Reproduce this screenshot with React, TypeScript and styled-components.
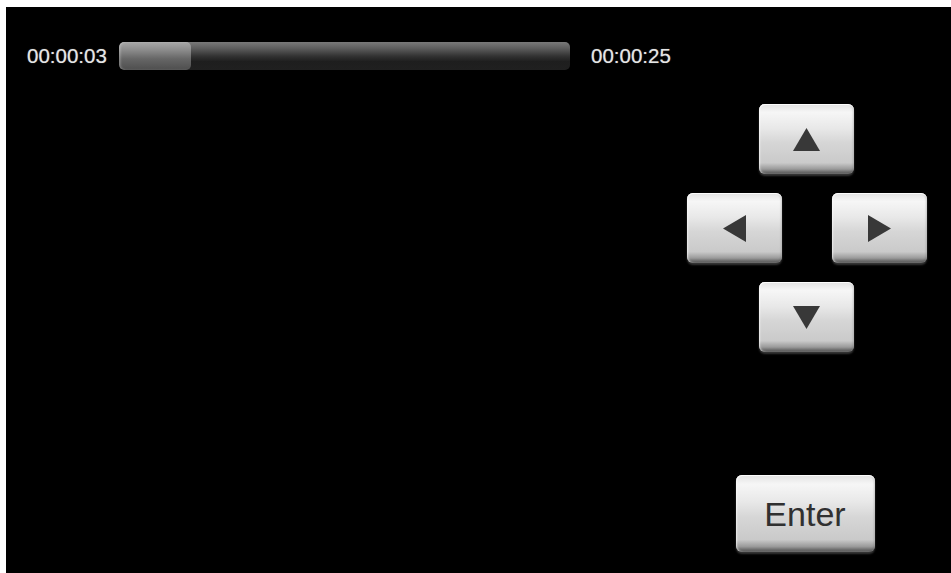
import React from "react";
import styled, { createGlobalStyle } from "styled-components";

const Global = createGlobalStyle`
  html, body { margin: 0; padding: 0; background: #ffffff; }
  body { font-family: "Liberation Sans", Arial, sans-serif; overflow: hidden; }
`;

const Screen = styled.div`
  width: 945px;
  height: 566px;
  margin: 7px 0 0 6px;
  background: #000;
  display: flex;
  flex-direction: column;
  box-sizing: border-box;
`;

const TopBar = styled.div`
  display: flex;
  align-items: center;
  margin-top: 35px;
  padding-left: 21px;
  height: 28px;
`;

const Time = styled.span`
  color: #e6e6e6;
  font-size: 20.5px;
  line-height: 1;
  width: 82px;
  text-shadow: 0 0 1px rgba(255, 255, 255, 0.5);
  white-space: nowrap;
`;

const Track = styled.div`
  width: 451px;
  height: 28px;
  margin: 0 21px 0 10px;
  border-radius: 5px;
  overflow: hidden;
  background: linear-gradient(
    to bottom,
    #7a7a7a 0%,
    #5a5a5a 25%,
    #333 50%,
    #1e1e1e 70%,
    #202020 100%
  );
  display: flex;
`;

const Fill = styled.div`
  height: 100%;
  border-radius: 5px;
  background: linear-gradient(
    to bottom,
    #a8a8a8 0%,
    #8a8a8a 30%,
    #666 60%,
    #4e4e4e 100%
  );
  box-shadow: inset 2px 0 2px rgba(255, 255, 255, 0.2);
`;

const Controls = styled.div`
  align-self: flex-end;
  margin-right: 25px;
  margin-top: 34px;
  width: 239px;
  display: flex;
  flex-direction: column;
  align-items: center;
`;

const DPad = styled.div`
  display: flex;
  flex-direction: column;
  align-items: center;
  gap: 19px;
`;

const PadRow = styled.div`
  display: flex;
  gap: 50px;
`;

const Key = styled.button<{ $w?: number; $h?: number }>`
  width: ${(p) => p.$w ?? 95}px;
  height: ${(p) => p.$h ?? 70}px;
  border: none;
  border-radius: 6px;
  padding: 0;
  display: flex;
  align-items: center;
  justify-content: center;
  background: linear-gradient(
    to bottom,
    #e2e2e2 0%,
    #f6f6f6 12%,
    #e8e8e8 35%,
    #d6d6d6 55%,
    #cacaca 84%,
    #9a9a9a 93%,
    #4a4a4a 100%
  );
  box-shadow: inset 0 1px 1px #fff, inset 1px 0 2px rgba(255, 255, 255, 0.6),
    inset -1px 0 2px rgba(0, 0, 0, 0.2), 0 2px 2px rgba(90, 90, 90, 0.6);
  color: #333;
  font-family: "Liberation Sans", Arial, sans-serif;
  cursor: pointer;
`;

const EnterKey = styled(Key)`
  margin-top: 123px;
  margin-right: 3px;
  font-size: 34px;
  color: #303030;
  padding-top: 2px;
`;

const Arrow = ({ dir }: { dir: "up" | "down" | "left" | "right" }) => {
  const pts = {
    up: "13.5,0 27,23 0,23",
    down: "0,0 27,0 13.5,23",
    left: "23,0 23,27 0,13.5",
    right: "0,0 23,13.5 0,27",
  }[dir];
  const vertical = dir === "up" || dir === "down";
  const w = vertical ? 27 : 23;
  const h = vertical ? 23 : 27;
  return (
    <svg width={w} height={h} viewBox={`0 0 ${w} ${h}`}>
      <polygon points={pts} fill="#383838" />
    </svg>
  );
};

export default function App() {
  const progress = 3 / 25;
  return (
    <>
      <Global />
      <Screen>
        <TopBar>
          <Time>00:00:03</Time>
          <Track>
            <Fill style={{ width: `${Math.round(progress * 100 + 4)}%` }} />
          </Track>
          <Time>00:00:25</Time>
        </TopBar>
        <Controls>
          <DPad>
            <Key aria-label="up">
              <Arrow dir="up" />
            </Key>
            <PadRow>
              <Key aria-label="left">
                <Arrow dir="left" />
              </Key>
              <Key aria-label="right">
                <Arrow dir="right" />
              </Key>
            </PadRow>
            <Key aria-label="down">
              <Arrow dir="down" />
            </Key>
          </DPad>
          <EnterKey $w={139} $h={77}>
            Enter
          </EnterKey>
        </Controls>
      </Screen>
    </>
  );
}
